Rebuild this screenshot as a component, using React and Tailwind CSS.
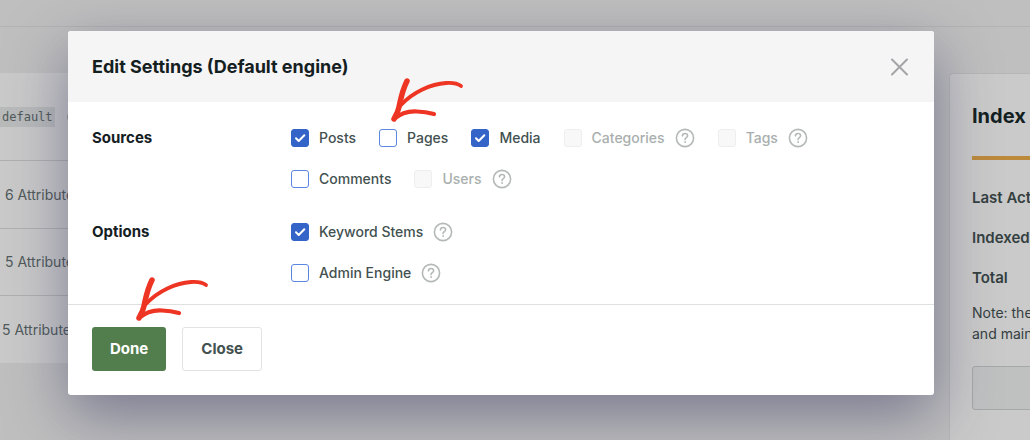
import React from 'react';

function HelpIcon({ label }) {
  return (
    <button type="button" aria-label={`Help: ${label}`} className="text-[#b4b9b8]">
      <svg width="20" height="20" viewBox="0 0 20 20" fill="none" stroke="currentColor" strokeWidth="1.6" strokeLinecap="round" strokeLinejoin="round">
        <circle cx="10" cy="10" r="8.6" />
        <path d="M7.4 7.9c.1-1.500 1.200-2.400 2.600-2.400s2.600.9 2.600 2.200c0 2-2.600 2-2.600 3.900" />
        <circle cx="10" cy="14" r=".5" fill="currentColor" strokeWidth=".8" />
      </svg>
    </button>
  );
}

function Option({ label, checked = false, disabled = false, help = false }) {
  return (
    <div className="flex h-5 items-center gap-2.5">
      <label className="flex items-center gap-2.5">
        <span className="grid">
          <input
            type="checkbox"
            defaultChecked={checked}
            disabled={disabled}
            className="peer col-start-1 row-start-1 size-[18px] appearance-none rounded-[3px] border border-[#5b87e0] bg-white checked:border-[#3464c8] checked:bg-[#3464c8] disabled:border-[#eeeeee] disabled:bg-[#f8f8f8]"
          />
          <svg viewBox="0 0 18 18" fill="none" stroke="white" strokeWidth="2" strokeLinecap="round" strokeLinejoin="round" className="pointer-events-none invisible col-start-1 row-start-1 size-[18px] peer-checked:visible">
            <path d="M5 9.300 7.700 12 13.300 6.300" />
          </svg>
        </span>
        <span className={disabled ? 'text-[#a9afae]' : 'text-[#435150]'}>{label}</span>
      </label>
      {help && <HelpIcon label={label} />}
    </div>
  );
}

function Arrow({ className }) {
  return (
    <svg width="76" height="46" viewBox="0 0 76 46" fill="none" stroke="#ee3524" strokeLinecap="round" strokeLinejoin="round" className={className} aria-hidden="true">
      <path d="M17 5C12 15 11 22 9 31 8 36 6 39 4 43" strokeWidth="5.500" />
      <path d="M11 29C23 16 41 8 56 7c6-.4 11 0 15 3" strokeWidth="3.800" />
      <path d="M4 43c7-6 15-8 23-7.500 7 .3 11 1 17 2.500" strokeWidth="4.200" />
    </svg>
  );
}

function BackgroundPage() {
  return (
    <div inert className="flex min-h-screen flex-col text-[#505a5a]">
      <header className="h-[27px] border-b border-[#b3b3b3]" />
      <div className="flex flex-1 items-start gap-4 pt-[46px]">
        <section className="min-w-0 flex-1 bg-[#cacaca] text-sm">
          <div className="flex h-[87px] items-center gap-3">
            <code className="bg-[#b9bbbb] py-0.5 pr-0.5 pl-0.5 font-['DejaVu_Sans_Mono',monospace] text-xs leading-4">default</code>
            <span className="size-3 rounded-full border-2 border-[#999]" />
          </div>
          <p className="flex h-[68px] items-center border-t border-[#b0b0b2] pl-[5px]">6 Attributes</p>
          <p className="flex h-[67px] items-center border-t border-[#b0b0b2] pl-[5px]">5 Attributes</p>
          <p className="flex h-[68px] items-center border-t border-[#b0b0b2] pl-0.5">5 Attributes</p>
        </section>
        <aside className="w-[81px] overflow-hidden rounded-l border border-r-0 border-[#b5b6b8] bg-[#cacaca] pt-7 pb-7 pl-[22px] whitespace-nowrap">
          <h2 className="text-xl leading-7 font-bold text-[#14201f]">Index Status</h2>
          <hr className="mt-[26px] border-t-4 border-[#bd8a3c]" />
          <dl className="mt-[18px] text-[15px] leading-10 font-semibold text-[#344040]">
            <dt>Last Activity</dt>
            <dt>Indexed</dt>
            <dt>Total</dt>
          </dl>
          <p className="mt-1 text-sm leading-[21px] text-[#344040]">
            Note: the index is built<br />and maintained
          </p>
          <button type="button" aria-label="Rebuild" className="mt-[22px] h-11 w-60 rounded-[3px] border border-[#a5a9a9] bg-[#bfc1c1]" />
        </aside>
      </div>
    </div>
  );
}

export default function App() {
  return (
    <div className="relative h-screen overflow-hidden bg-[#bfbfbf] font-['Inter',sans-serif]">
      <BackgroundPage />
      <div className="absolute inset-0 pt-[31px] pr-24 pl-[68px]">
        <div role="dialog" aria-labelledby="dialog-title" className="relative rounded-[3px] bg-white shadow-[0_20px_60px_rgba(50,50,93,0.5)]">
          <div className="flex h-[71px] items-center justify-between rounded-t-[3px] bg-[#f5f5f5] pr-6 pl-6">
            <h1 id="dialog-title" className="text-lg font-bold text-[#14201f]">Edit Settings (Default engine)</h1>
            <button type="button" aria-label="Close dialog" className="text-[#a4a4a8]">
              <svg width="20" height="20" viewBox="0 0 20 20" fill="none" stroke="currentColor" strokeWidth="2" strokeLinecap="round">
                <path d="M2 2.500 17 17.500M17 2.500 2 17.500" />
              </svg>
            </button>
          </div>
          <div className="grid grid-cols-[199px_1fr] gap-y-[33px] border-b border-[#dfe0e0] px-6 pt-[26px] pb-[21px] text-sm font-medium">
            <h2 className="text-[15px] leading-5 font-bold text-[#14201f]">Sources</h2>
            <div className="flex max-w-[540px] flex-wrap gap-x-[23px] gap-y-[21px]">
              <Option label="Posts" checked />
              <Option label="Pages" />
              <Option label="Media" checked />
              <Option label="Categories" disabled help />
              <Option label="Tags" disabled help />
              <Option label="Comments" />
              <Option label="Users" disabled help />
            </div>
            <h2 className="text-[15px] leading-5 font-bold text-[#14201f]">Options</h2>
            <div className="flex flex-col gap-[21px]">
              <Option label="Keyword Stems" checked help />
              <Option label="Admin Engine" help />
            </div>
          </div>
          <div className="flex gap-4 px-6 pt-[22px] pb-6 text-[15px] font-bold">
            <button type="button" className="h-11 rounded-[3px] bg-[#527d4c] px-[18px] text-white">Done</button>
            <button type="button" className="h-11 rounded-[3px] border border-[#e2e3e3] bg-white px-[18px] text-[#435150]">Close</button>
          </div>
          <Arrow className="pointer-events-none absolute top-[45px] left-[322px]" />
          <Arrow className="pointer-events-none absolute top-[244px] left-[67px]" />
        </div>
      </div>
    </div>
  );
}
